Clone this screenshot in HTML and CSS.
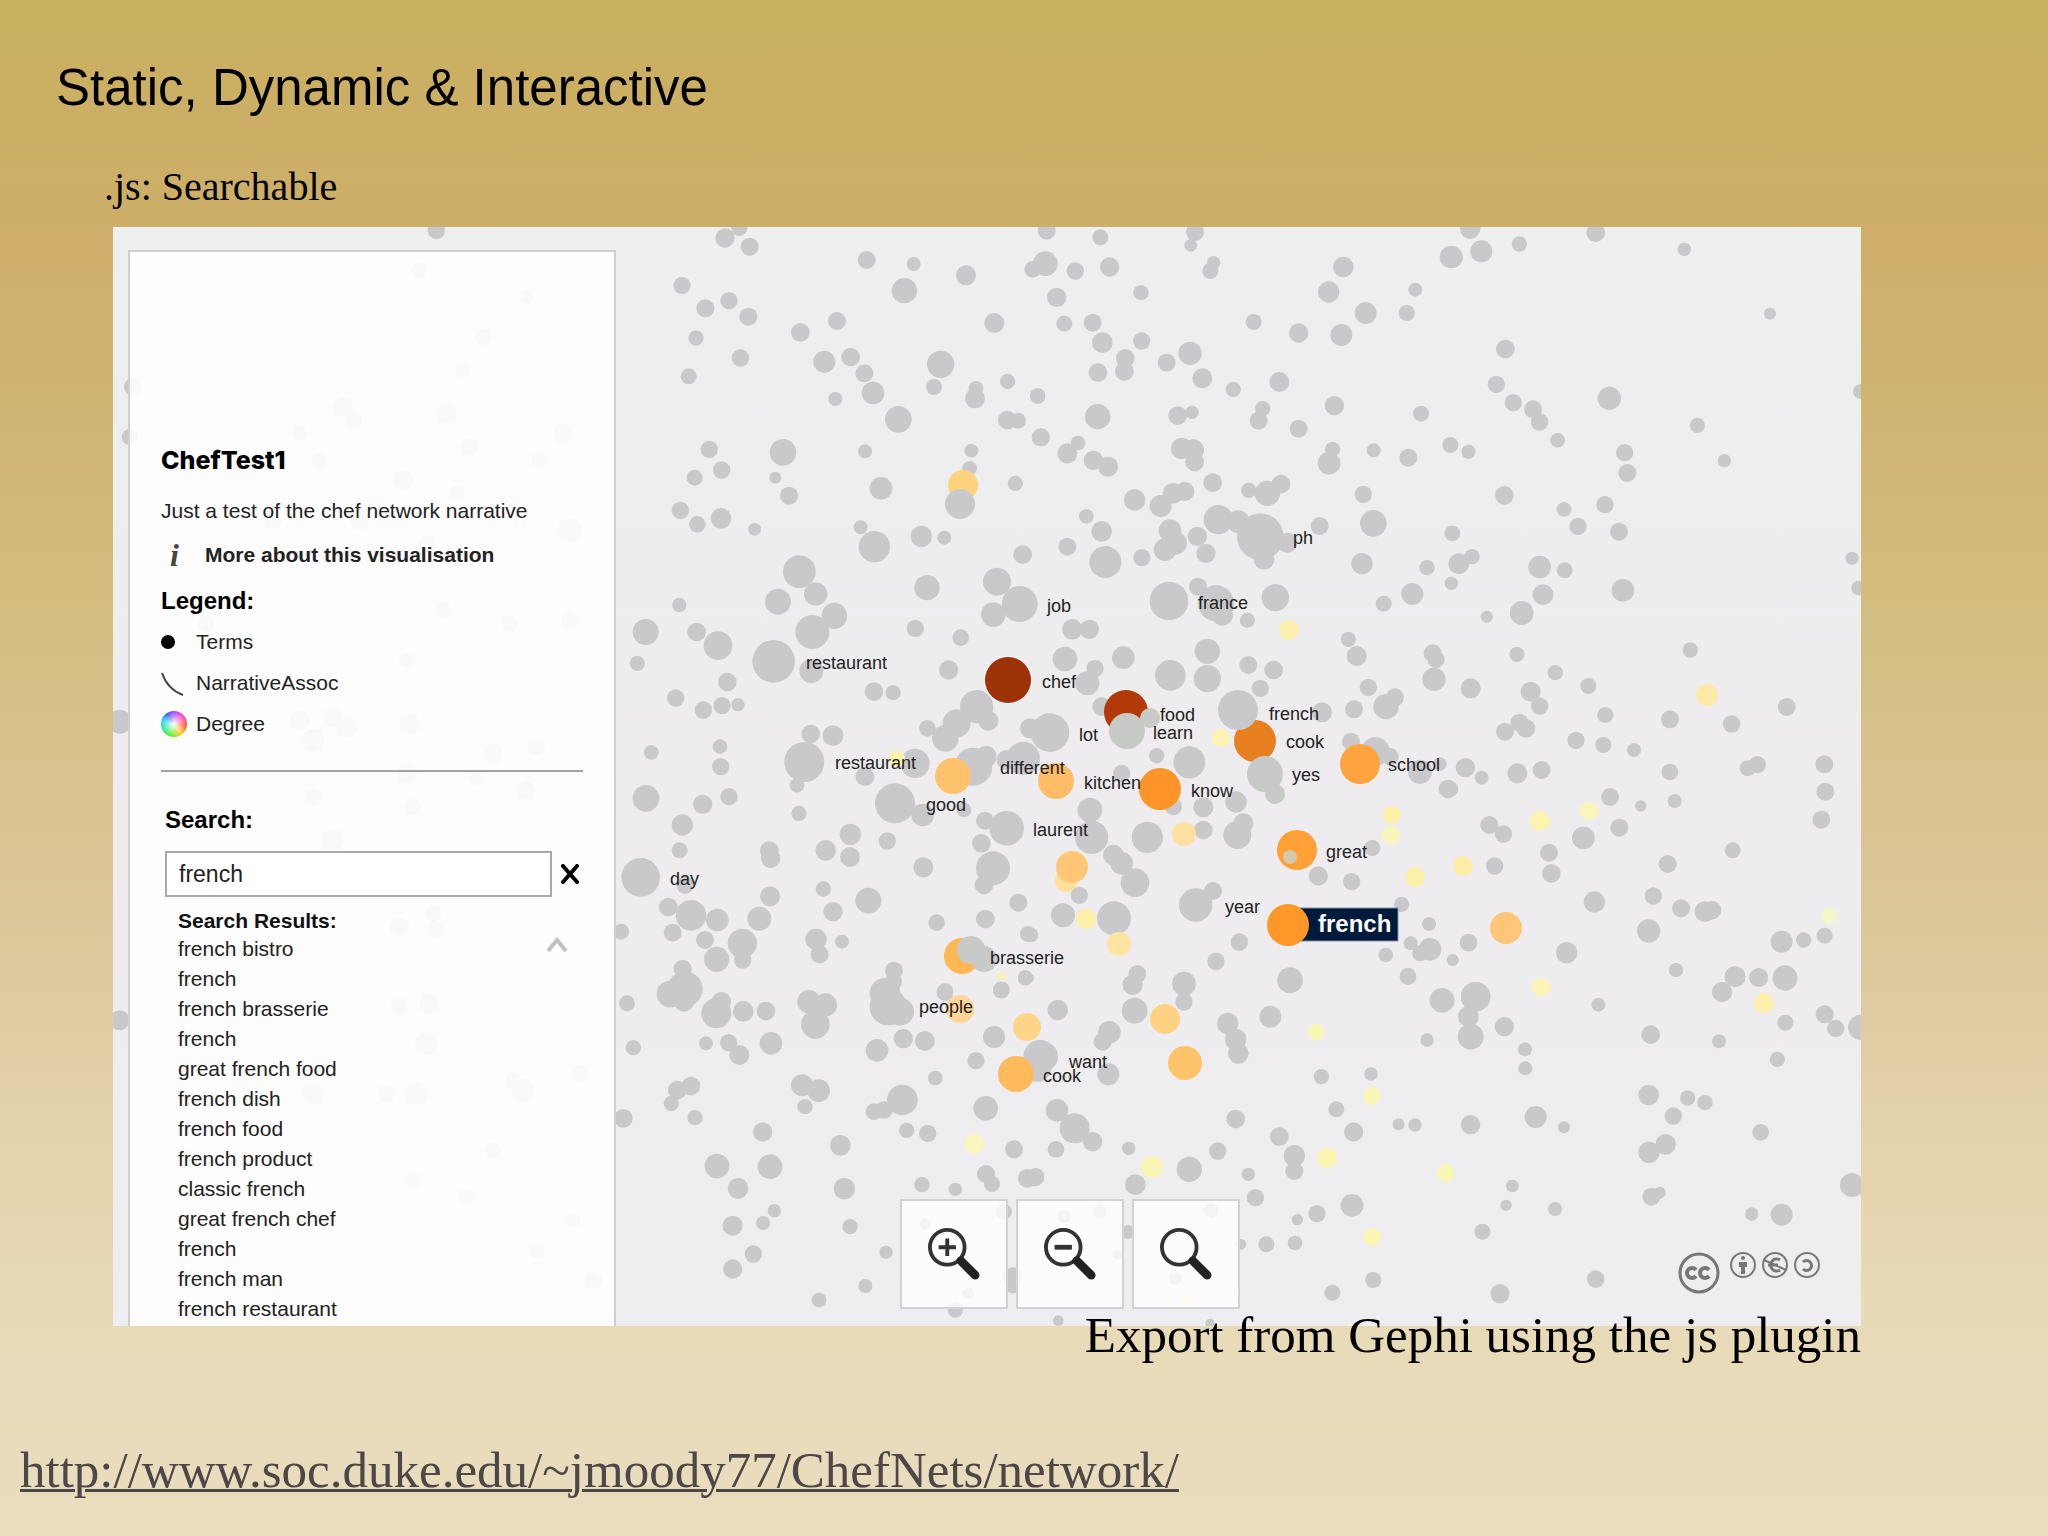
FILE: index.html
```html
<!DOCTYPE html>
<html lang="en">
<head>
<meta charset="utf-8">
<meta name="viewport" content="width=device-width, initial-scale=1">
<title>Static, Dynamic &amp; Interactive</title>
<link rel="stylesheet" href="styles.css">
</head>
<body>
<main class="slide">
  <h1 class="title">Static, Dynamic &amp; Interactive</h1>
  <p class="subtitle">.js: Searchable</p>

  <figure class="figure">
    <div class="stage">
      <svg class="graph" id="graph" viewBox="0 0 1748 1099" preserveAspectRatio="xMidYMin slice" role="img" aria-label="Chef network graph"></svg>

      <aside class="sidebar">
        <h2 class="name">ChefTest1</h2>
        <p class="about">Just a test of the chef network narrative</p>
        <button class="more" type="button"><span class="info">i</span>More about this visualisation</button>
        <h3 class="heading">Legend:</h3>
        <ul class="legend">
          <li><svg width="26" height="26" viewBox="0 0 26 26"><circle cx="7" cy="13" r="7" fill="#000"/></svg>Terms</li>
          <li><svg width="26" height="26" viewBox="0 0 26 26"><path d="M1 3C4 12 11 21 22 25" fill="none" stroke="#444" stroke-width="2"/></svg>NarrativeAssoc</li>
          <li><span class="wheel"></span>Degree</li>
        </ul>
        <hr class="rule">
        <form class="search">
          <label class="search-label" for="q">Search:</label>
          <div class="search-row">
            <input class="search-input" id="q" type="text" value="french">
            <button class="clear" type="button" aria-label="Clear"><svg width="18" height="20" viewBox="0 0 18 20"><path d="M2 2L16 18M16 2L2 18" stroke="#000" stroke-width="4" stroke-linecap="round"/></svg></button>
          </div>
        </form>
        <div class="results">
          <div>
            <h4 class="results-title">Search Results:</h4>
            <ul class="results-list">
              <li>french bistro</li><li>french</li><li>french brasserie</li><li>french</li>
              <li>great french food</li><li>french dish</li><li>french food</li><li>french product</li>
              <li>classic french</li><li>great french chef</li><li>french</li><li>french man</li>
              <li>french restaurant</li>
            </ul>
          </div>
          <svg class="chevron" width="22" height="18" viewBox="0 0 22 18"><path d="M2 15L11 4L20 15" fill="none" stroke="#c2c2c2" stroke-width="4"/></svg>
        </div>
      </aside>

      <div class="zoom">
        <button class="zoom-button" type="button" aria-label="Zoom in"><svg viewBox="0 0 108 108"><circle cx="47" cy="47" r="18" fill="none" stroke="#333" stroke-width="4"/><path d="M47 38V56M38 47H56" stroke="#333" stroke-width="4"/><path d="M61 61L76 76" stroke="#222" stroke-width="9" stroke-linecap="round"/></svg></button>
        <button class="zoom-button" type="button" aria-label="Zoom out"><svg viewBox="0 0 108 108"><circle cx="47" cy="47" r="18" fill="none" stroke="#333" stroke-width="4"/><path d="M38 47H56" stroke="#333" stroke-width="5"/><path d="M61 61L76 76" stroke="#222" stroke-width="9" stroke-linecap="round"/></svg></button>
        <button class="zoom-button" type="button" aria-label="Reset zoom"><svg viewBox="0 0 108 108"><circle cx="47" cy="47" r="18" fill="none" stroke="#333" stroke-width="4"/><path d="M61 61L76 76" stroke="#222" stroke-width="9" stroke-linecap="round"/></svg></button>
      </div>

      <svg class="licence" width="144" height="44" viewBox="0 0 144 44" role="img" aria-label="Creative Commons licence" fill="none" stroke="#77777a">
        <circle cx="22" cy="22" r="19" stroke-width="3"/>
        <path d="M19 19A5 5 0 1 0 19 25M32 19A5 5 0 1 0 32 25" stroke-width="4"/>
        <g stroke-width="2">
          <circle cx="66" cy="14" r="12"/><circle cx="98" cy="14" r="12"/><circle cx="130" cy="14" r="12"/>
        </g>
        <path d="M66 11V23" stroke-width="4"/><path d="M62 11H70V16H62Z" fill="#77777a" stroke="none"/><circle cx="66" cy="7" r="2" fill="#77777a" stroke="none"/>
        <path d="M103 9A6 6 0 1 0 103 19M91 14H101" stroke-width="3"/><path d="M87 9L109 19" stroke-width="2"/>
        <path d="M126 11A5 5 0 1 1 126 18" stroke-width="3"/>
      </svg>
    </div>
    <figcaption class="caption">Export from Gephi using the js plugin</figcaption>
  </figure>

  <a class="source" href="http://www.soc.duke.edu/~jmoody77/ChefNets/network/">http://www.soc.duke.edu/~jmoody77/ChefNets/network/</a>
</main>
<script src="graph.js"></script>
</body>
</html>
```

FILE: styles.css
```css
* {
  box-sizing: border-box;
}

body {
  margin: 0;
  min-height: 100vh;
  background: linear-gradient(#c9b060 0%, #ceae69 16%, #d4bd80 40%, #dfcaa0 64%, #e8dab6 84%, #e9ddbf 100%) no-repeat;
  color: #000;
  font-family: "Liberation Serif", "Times New Roman", serif;
}

h1, h2, h3, h4, p, ul, figure {
  margin: 0;
  padding: 0;
  font-weight: normal;
}

ul {
  list-style: none;
}

button {
  padding: 0;
  border: 0;
  background: none;
  color: inherit;
  font: inherit;
  text-align: left;
  cursor: pointer;
}

.slide {
  padding: 58px 0 36px;
}

.title {
  padding-left: 56px;
  font: 51px/60px "Liberation Sans", Arial, sans-serif;
}

.subtitle {
  padding: 45px 0 16px 104px;
  font-size: 40px;
  line-height: 48px;
}

.figure {
  margin: 0 187px 0 113px;
}

.stage {
  position: relative;
  overflow: hidden;
  padding: 23px 15px 0;
  background: linear-gradient(#edf0ee 0%, #edeeef 20%, #eeecee 50%, #eeedef 100%);
  color: #222;
  font: 21px/30px "Liberation Sans", Arial, sans-serif;
}

.graph {
  position: absolute;
  inset: 0;
  width: 100%;
  height: 100%;
}

.graph text {
  font: 18px "Liberation Sans", Arial, sans-serif;
  fill: #222;
}

.graph .hit {
  font-size: 24px;
  font-weight: bold;
  fill: #fff;
}

.sidebar {
  position: relative;
  width: 488px;
  height: 1076px;
  padding: 192px 31px 0;
  overflow: hidden;
  border: 2px solid #cfcfd1;
  border-bottom: 0;
  background: rgba(255, 255, 255, 0.88);
}

.name {
  color: #000;
  font-family: Inter, "Liberation Sans", sans-serif;
  font-size: 25px;
  font-weight: 800;
  line-height: 32px;
}

.about {
  padding-top: 20px;
  white-space: nowrap;
}

.more {
  display: flex;
  align-items: center;
  gap: 27px;
  padding: 14px 0 16px 9px;
  font-weight: bold;
}

.info {
  width: 8px;
  color: #444;
  font: italic bold 32px/30px "Liberation Serif", serif;
}

.heading,
.search-label {
  color: #000;
  font-size: 24px;
  font-weight: bold;
  line-height: 30px;
}

.legend {
  padding-top: 6px;
}

.legend li {
  display: flex;
  align-items: center;
  gap: 9px;
  height: 40px;
}

.legend li + li {
  margin-top: 1px;
}

.wheel {
  width: 26px;
  height: 26px;
  border-radius: 50%;
  background: radial-gradient(circle, #fff 0%, rgba(255, 255, 255, 0) 70%), conic-gradient(#a4f, #f4a 60deg, #f52 100deg, #fc2 140deg, #6e1 190deg, #2e8 240deg, #2cf 290deg, #35f 325deg, #a4f);
}

.rule {
  height: 2px;
  margin: 26px 0 33px;
  border: 0;
  background: #a3a3a5;
}

.search {
  padding-left: 4px;
}

.search-label {
  display: block;
}

.search-row {
  display: flex;
  align-items: center;
  gap: 9px;
  padding-top: 16px;
}

.search-input {
  flex: 1;
  min-width: 0;
  height: 46px;
  padding: 0 12px;
  border: 2px solid #a9a9a9;
  background: #fff;
  color: #222;
  font: 23px "Liberation Sans", Arial, sans-serif;
}

.clear {
  display: flex;
  margin-right: 4px;
}

.results {
  display: flex;
  justify-content: space-between;
  padding: 10px 15px 0 17px;
}

.results-title {
  color: #111;
  font-size: 21px;
  font-weight: bold;
  line-height: 27px;
}

.results-list li {
  height: 30px;
}

.chevron {
  margin-top: 29px;
}

.zoom {
  position: absolute;
  bottom: 17px;
  left: 45%;
  display: flex;
  gap: 8px;
}

.zoom-button {
  width: 108px;
  height: 110px;
  border: 2px solid #d2d2d4;
  background: rgba(255, 255, 255, 0.8);
}

.zoom-button svg {
  display: block;
}

.licence {
  position: absolute;
  right: 40px;
  bottom: 31px;
}

.caption {
  position: relative;
  margin-top: -21px;
  font-size: 51px;
  line-height: 60px;
  text-align: right;
}

.source {
  display: inline-block;
  margin: 75px 0 0 20px;
  color: #4d4747;
  font-size: 51px;
  line-height: 60px;
  text-decoration-thickness: 3px;
}
```

FILE: graph.js
```js
const NS = "http://www.w3.org/2000/svg";
const graph = document.getElementById("graph");

function add(tag, attrs, text) {
  const el = document.createElementNS(NS, tag);
  for (const key in attrs) el.setAttribute(key, attrs[key]);
  if (text) el.textContent = text;
  graph.appendChild(el);
}

// Each sector: origin x, origin y, then nodes as "x y r" in thirds of a unit.
const sectors = [
  [497, -7, "345 54 29 388 24 24 419 80 27 216 196 26 286 265 27 357 242 26 415 290 27 258 354 23 391 414 26 236 469 24 571 337 28 681 303 27 643 425 33 722 411 28 763 460 27 789 519 34 676 537 21 865 598 40 770 120 27 911 132 21 883 212 38 1068 166 30 1153 309 30 992 433 41 972 501 24 1098 505 22 1095 535 30 1193 484 23 1283 528 23 1192 600 28 1224 602 24 1292 652 27 298 688 26 335 750 26 254 773 24 519 697 40 496 773 18 537 827 27 211 871 26 262 913 25 333 895 31 434 928 19 765 694 21 813 805 34 1084 692 21 1079 745 22 1216 790 23 752 922 21 793 980 47 934 949 32 1003 953 21 1238 1004 28 568 1055 49 504 1145 39 617 1122 35 673 1185 37 951 1103 38 208 1155 21 1161 1085 42 1229 1152 54 1150 1183 36"],
  [917, -7, "50 32 27 211 52 24 495 36 27 482 76 19 46 131 37 8 148 25 136 153 26 239 141 29 80 232 29 333 218 23 551 128 20 541 153 24 103 311 24 188 308 27 217 368 31 335 363 26 286 415 28 283 454 28 204 458 28 480 400 35 410 428 27 517 475 30 610 508 23 671 306 24 806 339 29 934 345 33 940 141 31 896 216 32 1007 279 33 1130 279 24 1156 209 21 1262 111 33 1320 27 30 748 486 30 698 566 23 686 602 27 806 626 27 913 557 29 203 590 38 443 587 28 486 577 20 23 528 23 33 652 27 112 700 30 144 669 22 190 721 29 234 740 30 455 685 32 490 690 32 494 726 28 548 788 28 908 688 23 897 730 34 1031 691 21 1135 713 27 1173 581 24 1261 675 24 1316 695 21 314 840 32 392 858 33 429 820 31 464 814 29 656 811 23 712 820 38 753 792 28 1000 823 26 169 889 22 215 934 31 420 932 34 405 989 34 437 970 34 502 949 29 528 1000 29 565 899 44 625 905 34 691 950 70 772 968 30 702 1018 31 869 918 27 1030 910 40 1266 940 23 112 980 27 226 1026 48 336 1013 26 417 1143 58 504 1100 27 558 1150 54 577 1185 32 736 1133 41 996 1031 32 1191 1043 23 1287 1031 31 1264 1090 20 1147 1122 33 1061 1151 24 652 1200 22"],
  [1337, -7, "62 22 30 6 111 33 94 94 33 208 72 23 437 38 28 703 88 20 960 281 18 166 387 28 139 493 26 190 548 26 249 568 27 269 606 26 323 661 22 478 535 35 742 616 23 823 722 20 524 698 26 532 759 27 163 826 28 342 868 22 384 919 26 465 854 26 507 935 27 55 696 20 8 940 23 66 1010 23 25 1032 30 269 1041 34 344 1051 24 279 1124 31 519 1111 34 1231 515 22 1206 1015 20 1226 1104 22 215 1180 35 110 1190 18"],
  [497, 373, "107 96 39 82 190 23 260 96 28 324 137 43 208 15 21 607 96 51 673 49 38 491 184 64 604 213 36 352 246 28 197 294 26 280 330 26 336 317 26 384 314 20 792 275 28 849 278 23 916 85 26 1052 113 25 1150 45 36 1016 210 29 1100 320 50 1040 370 42 1135 362 30 952 385 25 1006 415 40 602 402 28 669 407 31 583 486 60 561 556 22 124 457 22 330 440 22 332 500 26 108 595 40 278 613 29 357 590 26 217 675 32 209 751 24 567 640 23 721 703 32 647 751 31 720 771 30 832 723 26 940 802 30 855 610 60 938 645 34 915 490 44 765 530 28 1090 500 57 1128 470 32 1240 475 50 1190 480 30 1062 630 22 1190 685 52 1125 662 27 1114 730 28 1149 805 51 1122 855 28 92 832 58 225 855 26 478 752 28 482 775 29 480 889 30 640 867 23 669 935 29 775 902 39 448 956 36 175 921 28 243 946 46 322 960 34 188 998 27 285 1020 27 320 1078 38 397 1030 44 398 1080 26 33 995 24 618 1018 32 629 1063 27 696 1025 21 980 968 25 1126 957 28 1225 908 27 1254 1002 24 218 1107 27 1174 1170 25 1246 1135 22 1005 1178 25 1260 385 30"],
  [917, 373, "127 88 31 178 88 29 105 177 37 195 205 26 172 250 36 280 173 34 421 226 46 532 154 38 532 236 41 655 195 27 691 265 26 731 210 28 652 62 22 955 118 23 980 168 30 1208 160 27 1218 178 26 1212 238 35 1318 267 24 1015 262 26 972 328 27 1068 320 38 1095 292 27 876 337 30 60 398 58 7 470 20 215 320 28 380 467 23 478 487 48 275 520 26 963 425 27 1036 455 43 1080 470 26 1170 515 36 1230 492 20 1306 503 26 1254 567 28 180 630 37 430 620 26 520 622 30 618 606 32 520 690 28 622 705 42 640 670 30 185 712 50 250 765 31 275 790 34 315 848 43 352 712 47 148 886 26 99 946 36 252 955 51 497 915 50 549 873 27 865 828 29 965 845 26 1027 744 24 628 1026 26 558 1084 26 780 1140 38 1115 913 23 1197 972 21 1142 1030 21 1200 1048 34 1170 1060 24 1067 1065 22 1134 1130 25 1269 1080 16 1316 1028 26 462 1150 35 322 1122 26 308 1155 30 3 1005 22 0 1135 12"],
  [1337, 373, "215 38 35 111 51 17 201 163 23 316 218 23 62 265 30 242 275 30 269 318 26 208 368 27 228 385 28 165 395 27 415 258 24 466 345 24 721 150 23 660 358 27 845 372 26 1010 321 27 378 421 26 460 435 24 552 450 21 660 516 25 893 505 24 922 494 26 1123 493 27 1126 575 27 1114 659 27 46 503 29 95 533 21 202 520 30 275 510 27 3 567 22 480 591 27 572 618 17 674 603 21 508 683 27 118 675 27 160 702 26 400 714 34 297 758 27 304 820 28 134 798 26 848 751 24 653 792 27 433 906 32 610 888 26 693 925 27 765 935 31 786 930 28 596 993 35 995 1025 33 1061 1020 23 1124 1007 24 55 1028 26 350 1058 32 8 1080 18 678 1110 21 855 1130 31 926 1133 28 1005 1133 37 816 1176 30 77 1190 44"],
  [497, 733, "218 27 27 225 87 53 180 102 40 222 125 30 51 130 24 70 263 23 319 160 45 334 125 29 400 154 31 468 153 28 288 250 21 356 248 26 388 285 30 483 250 34 597 125 35 646 135 35 616 193 43 852 32 27 825 100 46 835 140 56 870 155 42 850 65 26 801 271 34 880 236 29 945 243 30 1174 90 25 1246 52 22 1005 95 25 1152 231 33 1098 302 26 976 354 22 243 378 28 202 390 28 184 430 23 255 473 23 40 475 28 576 376 33 626 392 34 585 440 23 877 420 46 792 455 25 822 450 26 890 511 23 953 520 26 458 516 29 691 556 31 321 618 37 480 620 37 384 685 31 703 686 32 493 752 20 459 789 21 368 797 30 430 882 26 368 927 29 720 800 23 828 877 20 766 978 21 627 1020 22 936 674 23 1036 688 20 1128 642 27 1146 672 24 1252 655 28 1277 650 26 1127 445 37 1212 568 27 1290 290 50 1283 325 40 1182 755 24 1208 950 28 1208 980 20 1036 1050 23 945 792 17 1075 1000 18"],
  [917, 733, "83 150 31 322 42 26 308 74 30 462 73 35 462 126 26 314 152 39 238 217 34 218 245 27 235 343 33 40 290 44 593 190 32 617 238 32 625 280 31 721 170 33 780 62 38 558 5 25 1134 48 24 1236 121 37 1191 240 20 1023 342 20 874 350 23 919 448 24 971 516 29 1106 493 18 1155 495 20 81 451 34 134 505 45 188 545 29 78 568 25 296 565 20 316 674 31 478 628 38 563 573 26 617 477 28 655 643 20 676 713 26 748 530 28 793 587 32 793 633 27 802 779 17 861 761 26 966 736 34 633 853 16 709 853 24 795 849 22 1030 960 24 907 998 24 85 1082 16 15 652 27 1315 495 22 103 770 20 210 755 20 293 816 21 262 885 14 435 955 19 543 752 22 540 1090 14"],
  [1337, 733, "0 120 13 77 110 44 55 170 31 62 230 39 163 200 29 225 268 21 226 325 21 445 134 21 678 30 21 602 224 28 807 244 21 855 50 31 926 53 28 1005 55 37 816 96 30 1006 188 24 982 298 23 1124 163 27 1157 205 26 1232 202 38 596 405 31 713 414 23 765 428 23 670 468 26 647 553 31 597 577 32 62 494 29 257 471 33 342 502 18 187 678 19 168 736 17 97 815 24 315 747 21 604 710 27 629 698 18 932 517 25 905 762 20 995 764 33 1206 675 36 437 957 26 150 1001 29"],
  // nodes under and beside the side panel
  [0, 0, "20 1484 36 20 2380 30 970 10 26 60 480 27 280 1190 24 50 630 24 920 130 24 1240 210 20 690 540 30 720 580 26 740 880 28 1110 330 24 1050 430 22 560 620 22 620 700 24 1000 560 30 1070 660 26 1350 620 30 1280 700 24 870 760 30 1030 800 24 1370 910 36 480 880 26 940 950 24 990 1150 24 1190 1190 24 1370 1180 26 880 1300 22 560 1480 30 660 1470 30 700 1500 32 890 1490 30 600 1540 34 1140 1580 30 1270 1560 26 880 1640 30 1090 1650 24 1240 1690 28 600 1710 26 900 1740 24 660 1840 34 860 2100 28 960 2060 24 970 2110 26 860 2340 26 950 2330 30 940 2450 34 600 2600 32 820 2600 26 910 2600 34 1200 2560 24 1230 2590 34 1400 2540 26 1140 2770 24 900 2860 24 1060 2910 24 1380 2980 22 1270 3070 24 1440 3160 26"]
];

for (const [ox, oy, list] of sectors) {
  const n = list.split(" ").map(Number);
  for (let i = 0; i < n.length; i += 3) {
    add("circle", { cx: ox + n[i] / 3, cy: oy + n[i + 1] / 3, r: n[i + 2] / 3, fill: "#c9c8ca" });
  }
}

// Highlighted neighbours, painted over the muted nodes in order.
const lit = [
  [850, 258, 15, "#ffd27c"], [1176, 403, 10, "#fdf0b0"], [784, 532, 8, "#fdf3ab"], [1108, 511, 9, "#fdf3b0"],
  [888, 749, 5, "#fbeec0"], [1594, 468, 11, "#feeaa6"], [1279, 588, 9, "#fdf0a8"], [1278, 608, 9, "#f8f5b8"],
  [1302, 650, 10, "#fdf1aa"], [1350, 639, 10, "#fdeea8"], [1427, 594, 10, "#fcf4ad"], [1476, 584, 9, "#fbf5b8"],
  [1071, 607, 12, "#fee0a0"], [973, 692, 10, "#fdf0a8"], [1006, 717, 12, "#fee6a2"], [1716, 689, 8, "#f4f7ca"],
  [1428, 760, 9, "#fdf3b5"], [1651, 776, 10, "#fdf1ac"], [1203, 805, 8, "#f9f6b4"], [1259, 869, 9, "#f9f6b4"],
  [1214, 931, 10, "#faf4b0"], [1333, 946, 9, "#f8f6b4"], [1259, 1010, 9, "#fbf5b2"], [1039, 940, 11, "#f7f4b4"],
  [861, 917, 10, "#fbf4bc"], [1074, 1073, 6, "#fbf5c0"], [953, 654, 11, "#ffe09a"],
  [895, 453, 23, "#9c3206"], [1013, 485, 22, "#b33a08"], [1142, 514, 21, "#e8801f"], [840, 549, 18, "#ffc26c"],
  [943, 554, 18, "#ffbd68"], [1047, 562, 21, "#ff942a"], [1247, 537, 20, "#ffa43e"], [1184, 623, 20, "#ffa136"],
  [959, 640, 16, "#ffc676"], [849, 729, 18, "#ffb654"], [847, 782, 14, "#ffd597"], [914, 800, 14, "#ffd489"],
  [1052, 792, 15, "#ffd283"], [1072, 836, 17, "#ffc36b"], [903, 847, 18, "#ffba5b"], [1393, 701, 16, "#ffc67a"],
  [847, 277, 15, "#c9c8ca"], [1014, 504, 18, "#c8cac8"], [1037, 491, 10, "#c8cac8"], [1125, 483, 20, "#c9c8ca"],
  [1152, 547, 18, "#c8cac8"], [1162, 567, 10, "#c8cac8"], [1177, 630, 7, "#d4c9ae"], [858, 723, 14, "#c8cac8"], [871, 732, 13, "#c8cac8"]
];
for (const [cx, cy, r, fill] of lit) add("circle", { cx, cy, r, fill });

add("rect", { x: 1172, y: 681, width: 113, height: 33, fill: "#001a3c", stroke: "#8090a0", "stroke-width": 1 });
add("circle", { cx: 1175, cy: 698, r: 21, fill: "#ff9829" });
add("text", { x: 1205, y: 705, class: "hit" }, "french");

const labels = [
  [1180, 317, "ph"], [934, 385, "job"], [1085, 382, "france"], [693, 442, "restaurant"], [929, 461, "chef"],
  [1047, 494, "food"], [1040, 512, "learn"], [966, 514, "lot"], [1156, 493, "french"], [1173, 521, "cook"],
  [1275, 544, "school"], [722, 542, "restaurant"], [887, 547, "different"], [971, 562, "kitchen"], [1078, 570, "know"],
  [1179, 554, "yes"], [813, 584, "good"], [920, 609, "laurent"], [1213, 631, "great"], [557, 658, "day"],
  [1112, 686, "year"], [877, 737, "brasserie"], [806, 786, "people"], [956, 841, "want"], [930, 855, "cook"]
];
for (const [x, y, text] of labels) add("text", { x, y }, text);
```
